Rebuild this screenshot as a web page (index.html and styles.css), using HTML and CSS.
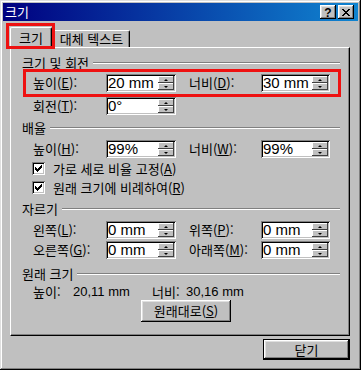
FILE: index.html
```html
<!DOCTYPE html>
<html lang="ko">
<head>
<meta charset="utf-8">
<title>크기</title>
<link rel="stylesheet" href="styles.css">
</head>
<body>
<div class="window">
  <div class="titlebar">
    <span class="title">크기</span>
    <div class="tbtns">
      <span class="tbtn help">?</span>
      <span class="tbtn close"><svg width="8" height="7" viewBox="0 0 8 7"><path d="M0 0h2v1h1v1h2V1h1V0h2v1H7v1H6v1H5v1h1v1h1v1h1v1H6V6H5V5H3v1H2v1H0V6h1V5h1V4h1V3H2V2H1V1H0z" fill="#000"/></svg></span>
    </div>
  </div>

  <div class="tabs">
    <div class="tab active">크기</div>
    <div class="tab">대체 텍스트</div>
  </div>

  <div class="panel">
    <div class="ghead"><span class="gtitle">크기 및 회전</span><span class="gline"></span></div>
    <div class="row r-e">
      <span class="lbl">높이(<u>E</u>):</span>
      <div class="spin"><span class="val">20 mm</span><span class="arrows"><i class="up"></i><i class="dn"></i></span></div>
      <span class="lbl lbl2">너비(<u>D</u>):</span>
      <div class="spin sp2"><span class="val">30 mm</span><span class="arrows"><i class="up"></i><i class="dn"></i></span></div>
    </div>
    <div class="row r-t">
      <span class="lbl">회전(<u>T</u>):</span>
      <div class="spin"><span class="val">0°</span><span class="arrows"><i class="up"></i><i class="dn"></i></span></div>
    </div>

    <div class="ghead g2"><span class="gtitle">배율</span><span class="gline"></span></div>
    <div class="row r-h">
      <span class="lbl">높이(<u>H</u>):</span>
      <div class="spin"><span class="val">99%</span><span class="arrows"><i class="up"></i><i class="dn"></i></span></div>
      <span class="lbl lbl2">너비(<u>W</u>):</span>
      <div class="spin sp2"><span class="val">99%</span><span class="arrows"><i class="up"></i><i class="dn"></i></span></div>
    </div>
    <div class="check c1">
      <span class="cbox"><svg width="7" height="7" viewBox="0 0 7 7"><path d="M6 0h1v3H6v1H5v1H4v1H3v1H2V6H1V5H0V2h1v1h1v1h1V3h1V2h1V1h1z" fill="#000"/></svg></span>
      <span class="clbl">가로 세로 비율 고정(<u>A</u>)</span>
    </div>
    <div class="check c2">
      <span class="cbox"><svg width="7" height="7" viewBox="0 0 7 7"><path d="M6 0h1v3H6v1H5v1H4v1H3v1H2V6H1V5H0V2h1v1h1v1h1V3h1V2h1V1h1z" fill="#000"/></svg></span>
      <span class="clbl">원래 크기에 비례하여(<u>R</u>)</span>
    </div>

    <div class="ghead g3"><span class="gtitle">자르기</span><span class="gline"></span></div>
    <div class="row r-l">
      <span class="lbl">왼쪽(<u>L</u>):</span>
      <div class="spin"><span class="val">0 mm</span><span class="arrows"><i class="up"></i><i class="dn"></i></span></div>
      <span class="lbl lbl2">위쪽(<u>P</u>):</span>
      <div class="spin sp2"><span class="val">0 mm</span><span class="arrows"><i class="up"></i><i class="dn"></i></span></div>
    </div>
    <div class="row r-g">
      <span class="lbl">오른쪽(<u>G</u>):</span>
      <div class="spin"><span class="val">0 mm</span><span class="arrows"><i class="up"></i><i class="dn"></i></span></div>
      <span class="lbl lbl2">아래쪽(<u>M</u>):</span>
      <div class="spin sp2"><span class="val">0 mm</span><span class="arrows"><i class="up"></i><i class="dn"></i></span></div>
    </div>

    <div class="ghead g4"><span class="gtitle">원래 크기</span><span class="gline"></span></div>
    <div class="info">
      <span class="i-k1">높이:</span><span class="i-v1">20,11 mm</span><span class="i-k2">너비:</span><span class="i-v2">30,16 mm</span>
    </div>
    <div class="btnrow"><span class="btn reset">원래대로(<u>S</u>)</span></div>
  </div>

  <div class="footer"><span class="btn default">닫기</span></div>

  <div class="hl hl1"></div>
  <div class="hl hl2"></div>
</div>
</body>
</html>
```

FILE: styles.css
```css
* { box-sizing: border-box; }
html, body { margin: 0; padding: 0; }
body {
  width: 361px;
  height: 370px;
  overflow: hidden;
  background: #c0c0c0;
  font-family: "Noto Sans CJK KR", "Noto Sans", sans-serif;
  font-size: 13px;
  color: #000;
}
u { text-decoration: underline; text-underline-offset: 1px; }

.window {
  position: relative;
  width: 361px;
  height: 370px;
  padding: 3px;
  background: #c0c0c0;
  box-shadow: inset -1px -1px #000, inset 1px 1px #dfdfdf, inset -2px -2px #808080, inset 2px 2px #fff;
}

/* title bar */
.titlebar {
  height: 18px;
  display: flex;
  align-items: center;
  padding: 0 4px 0 2px;
  background: linear-gradient(to right, #000080, #1084d0);
}
.title {
  color: #fff;
  font-size: 13px;
  line-height: 18px;
}
.tbtns { margin-left: auto; display: flex; gap: 2px; }
.tbtn {
  width: 16px;
  height: 14px;
  display: flex;
  align-items: center;
  justify-content: center;
  background: #c0c0c0;
  box-shadow: inset -1px -1px #000, inset 1px 1px #fff, inset -2px -2px #808080, inset 2px 2px #dfdfdf;
}
.help {
  font-family: "Liberation Sans", sans-serif;
  font-weight: bold;
  font-size: 12px;
  line-height: 14px;
  padding-top: 1px;
}

/* tabs */
.tabs {
  height: 26px;
  display: flex;
  align-items: flex-end;
  padding-left: 7px;
}
.tab {
  height: 17px;
  background: #c0c0c0;
  border-top: 1px solid #fff;
  border-right: 1px solid #000;
  border-radius: 2px 2px 0 0;
  box-shadow: inset -1px 0 #808080;
  display: flex;
  align-items: center;
  justify-content: center;
  line-height: 14px;
  width: 78px;
  padding-left: 2px;
}
.tab.active {
  position: relative;
  z-index: 1;
  width: 42px;
  height: 21px;
  margin-bottom: -1px;
  border-left: 1px solid #fff;
  padding: 0 0 1px 0;
}

/* panel */
.panel {
  margin: 0 8px 0 7px;
  height: 289px;
  padding: 8px 9px 0 11px;
  border-top: 1px solid #fff;
  border-left: 1px solid #fff;
  border-right: 1px solid #000;
  border-bottom: 1px solid #000;
  box-shadow: inset -1px -1px #808080;
}

.ghead {
  height: 14px;
  display: flex;
  align-items: center;
  line-height: 14px;
}
.gtitle { white-space: nowrap; margin-right: 4px; }
.gline {
  flex: 1;
  height: 2px;
  border-top: 1px solid #808080;
  border-bottom: 1px solid #fff;
}
.g2 { margin-top: 6px; }
.g3 { margin-top: 8px; }
.g4 { margin-top: 8px; }

.row {
  height: 18px;
  display: flex;
  align-items: center;
  padding-left: 11px;
  line-height: 14px;
}
.r-e { margin-top: 4px; }
.r-t { margin-top: 5px; }
.r-h { margin-top: 5px; }
.r-l { margin-top: 5px; }
.r-g { margin-top: 2px; }

.lbl { width: 73px; white-space: nowrap; }
.lbl2 { margin-left: 13px; width: 72px; }

.spin {
  width: 70px;
  height: 18px;
  display: flex;
  align-items: center;
  background: #fff;
  box-shadow: inset 1px 1px #808080, inset -1px -1px #fff, inset 2px 2px #000, inset -2px -2px #c0c0c0;
  padding: 0 2px 0 2px;
}
.sp2 { width: 69px; }
.val {
  flex: 1;
  font-family: "Liberation Sans", sans-serif;
  font-size: 15px;
  line-height: 16px;
  white-space: nowrap;
  overflow: hidden;
}
.arrows {
  width: 16px;
  height: 14px;
  display: flex;
  flex-direction: column;
}
.arrows i {
  flex: 1;
  display: flex;
  align-items: center;
  justify-content: center;
  background: #c0c0c0;
  box-shadow: inset -1px -1px #404040, inset 1px 1px #fff;
}
.arrows i::after {
  content: "";
  width: 0;
  height: 0;
  border-left: 2px solid transparent;
  border-right: 2px solid transparent;
}
.arrows .up::after { border-bottom: 2px solid #000; }
.arrows .dn::after { border-top: 2px solid #000; }

.check {
  height: 13px;
  display: flex;
  align-items: center;
  padding-left: 10px;
  line-height: 14px;
}
.c1 { margin-top: 4px; }
.c2 { margin-top: 6px; }
.cbox {
  width: 13px;
  height: 13px;
  background: #fff;
  display: flex;
  align-items: center;
  justify-content: center;
  box-shadow: inset 1px 1px #808080, inset -1px -1px #fff, inset 2px 2px #000, inset -2px -2px #c0c0c0;
}
.clbl { margin-left: 8px; white-space: nowrap; }

.info {
  margin-top: 4px;
  height: 14px;
  display: flex;
  align-items: center;
  padding-left: 11px;
  line-height: 14px;
  white-space: nowrap;
}
.i-k1 { width: 40px; }
.i-v1 { width: 79px; font-family: "Liberation Sans", sans-serif; font-size: 13px; }
.i-k2 { width: 34px; }
.i-v2 { font-family: "Liberation Sans", sans-serif; font-size: 13px; }

.btnrow { margin-top: 1px; display: flex; padding-left: 119px; }
.btn {
  display: flex;
  align-items: center;
  justify-content: center;
  background: #c0c0c0;
  line-height: 14px;
  box-shadow: inset -1px -1px #000, inset 1px 1px #fff, inset -2px -2px #808080, inset 2px 2px #dfdfdf;
}
.reset { width: 90px; height: 22px; }

.footer {
  display: flex;
  justify-content: flex-end;
  margin: 3px 8px 0 0;
}
.default {
  width: 87px;
  height: 21px;
  border: 1px solid #000;
  box-shadow: inset -1px -1px #000, inset 1px 1px #fff, inset -2px -2px #808080, inset 2px 2px #dfdfdf;
}

/* annotation highlights */
.hl {
  position: absolute;
  border: 3px solid #ee1111;
  z-index: 5;
}
.hl1 { left: 6px; top: 23px; width: 49px; height: 26px; }
.hl2 { left: 23px; top: 69px; width: 318px; height: 28px; }
```
